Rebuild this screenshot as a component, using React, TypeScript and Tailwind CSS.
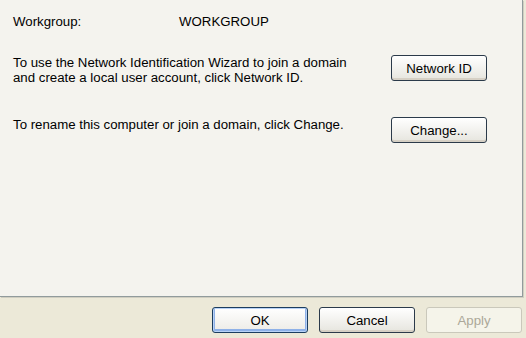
export default function App() {
  const font = { fontFamily: '"Liberation Sans", Arial, sans-serif' };

  return (
    <div
      className="w-[526px] h-[338px] bg-[#ece9d8] flex flex-col text-[13.25px] leading-[15px] text-black overflow-hidden"
      style={font}
    >
      <div className="w-[523px] h-[297px] bg-[#f4f3ee] border-r border-b border-[#919b9c] shadow-[1px_1px_0_#d0cec1] pt-[14px] pl-[13px]">
        <div className="flex">
          <span className="w-[166px]">Workgroup:</span>
          <span>WORKGROUP</span>
        </div>

        <div className="flex mt-[26px] pr-[35px]">
          <p className="flex-1">
            To use the Network Identification Wizard to join a domain
            <br />
            and create a local user account, click Network ID.
          </p>
          <XPButton label="Network ID" />
        </div>

        <div className="flex mt-[32px] pr-[35px]">
          <p className="flex-1">
            To rename this computer or join a domain, click Change.
          </p>
          <XPButton label="Change..." />
        </div>
      </div>

      <div className="flex justify-end gap-[11px] pr-[4px] mt-[10px]">
        <XPButton label="OK" primary />
        <XPButton label="Cancel" />
        <XPButton label="Apply" disabled />
      </div>
    </div>
  );
}

function XPButton({
  label,
  primary,
  disabled,
}: {
  label: string;
  primary?: boolean;
  disabled?: boolean;
}) {
  if (disabled) {
    return (
      <button className="w-[96px] h-[26px] rounded-[3px] border border-[#cac8bb] bg-[#f5f4ea] text-[#aca899] text-[13.25px]">
        {label}
      </button>
    );
  }
  return (
    <button
      className={
        primary
          ? "w-[96px] h-[26px] rounded-[3px] border border-[#1c3d5f] bg-gradient-to-b from-[#ffffff] to-[#ecebe6] shadow-[inset_0_0_0_1px_#b8d2f6,inset_0_-1px_0_2px_#8eb1e8] text-[13.25px]"
          : "w-[96px] h-[26px] rounded-[3px] border border-[#2b3a4a] bg-gradient-to-b from-[#ffffff] to-[#e6e5de] shadow-[inset_0_-2px_0_#d6d0c5] text-[13.25px]"
      }
    >
      {label}
    </button>
  );
}
